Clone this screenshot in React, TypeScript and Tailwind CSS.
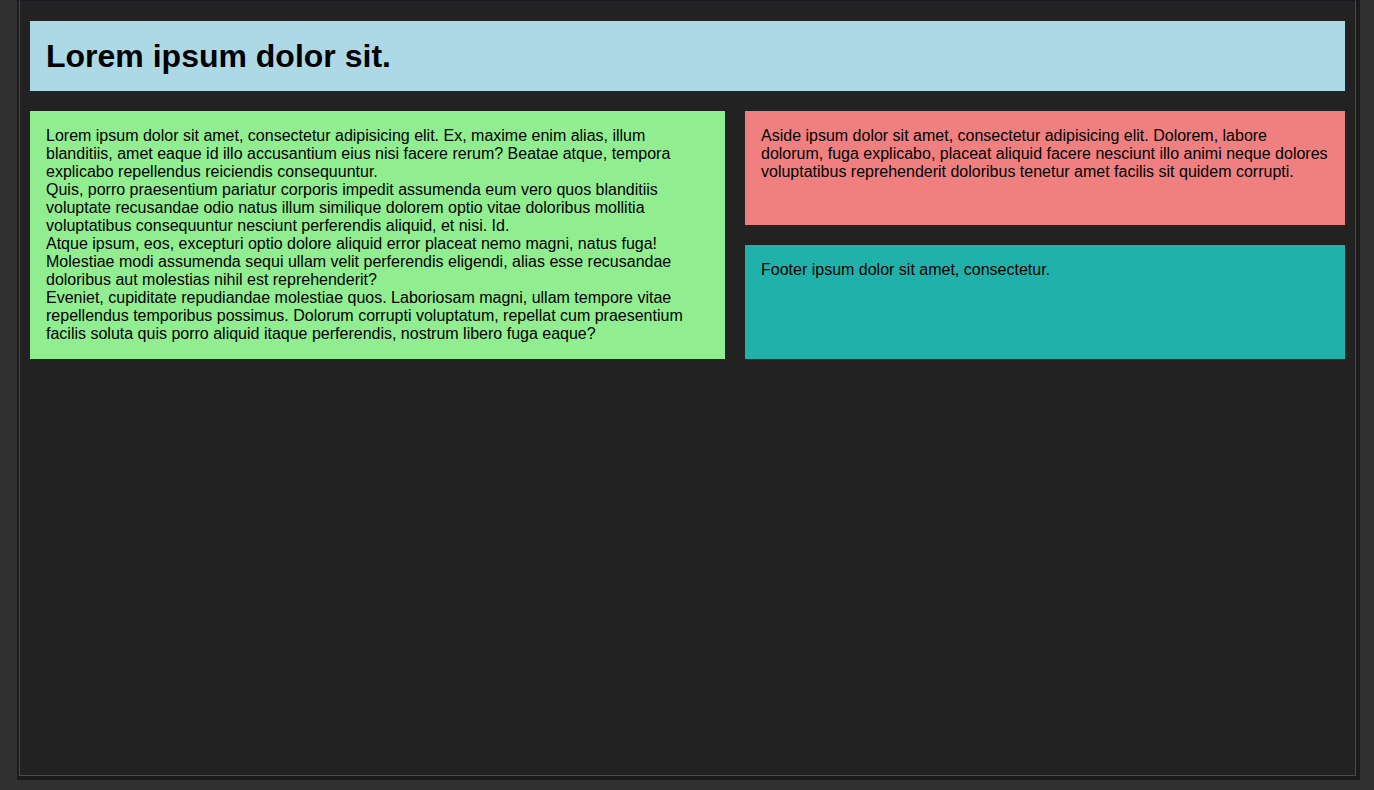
export default function App() {
  return (
    <div className="min-h-screen w-full bg-[#303030]" style={{ fontFamily: '"Liberation Sans", Arial, sans-serif' }}>
      <div className="ml-[19px] w-[1337px] h-[776px] border border-[#4a4a4a] border-t-[#1c1820] bg-[#222222] shadow-[1px_1px_0_3px_#1b1b1b] px-[10px] pt-[20px]">
        <div className="flex flex-col gap-[20px] text-black">
          <header className="h-[70px] bg-[#add8e6] flex items-center px-4">
            <h1 className="text-[32px] font-bold leading-[37px]">Lorem ipsum dolor sit.</h1>
          </header>
          <div className="grid grid-cols-[695px_600px] gap-[20px]">
            <main className="bg-[#90ee90] p-4 text-[16px] leading-[18px]">
              <div>Lorem ipsum dolor sit amet, consectetur adipisicing elit. Ex, maxime enim alias, illum blanditiis, amet eaque id illo accusantium eius nisi facere rerum? Beatae atque, tempora explicabo repellendus reiciendis consequuntur.</div>
              <div>Quis, porro praesentium pariatur corporis impedit assumenda eum vero quos blanditiis voluptate recusandae odio natus illum similique dolorem optio vitae doloribus mollitia voluptatibus consequuntur nesciunt perferendis aliquid, et nisi. Id.</div>
              <div>Atque ipsum, eos, excepturi optio dolore aliquid error placeat nemo magni, natus fuga! Molestiae modi assumenda sequi ullam velit perferendis eligendi, alias esse recusandae doloribus aut molestias nihil est reprehenderit?</div>
              <div>Eveniet, cupiditate repudiandae molestiae quos. Laboriosam magni, ullam tempore vitae repellendus temporibus possimus. Dolorum corrupti voluptatum, repellat cum praesentium facilis soluta quis porro aliquid itaque perferendis, nostrum libero fuga eaque?</div>
            </main>
            <div className="flex flex-col gap-[20px]">
              <aside className="h-[114px] bg-[#f08080] p-4 text-[16px] leading-[18px]">
                Aside ipsum dolor sit amet, consectetur adipisicing elit. Dolorem, labore dolorum, fuga explicabo, placeat aliquid facere nesciunt illo animi neque dolores voluptatibus reprehenderit doloribus tenetur amet facilis sit quidem corrupti.
              </aside>
              <footer className="h-[114px] bg-[#20b2aa] p-4 text-[16px] leading-[18px]">
                Footer ipsum dolor sit amet, consectetur.
              </footer>
            </div>
          </div>
        </div>
      </div>
    </div>
  );
}
